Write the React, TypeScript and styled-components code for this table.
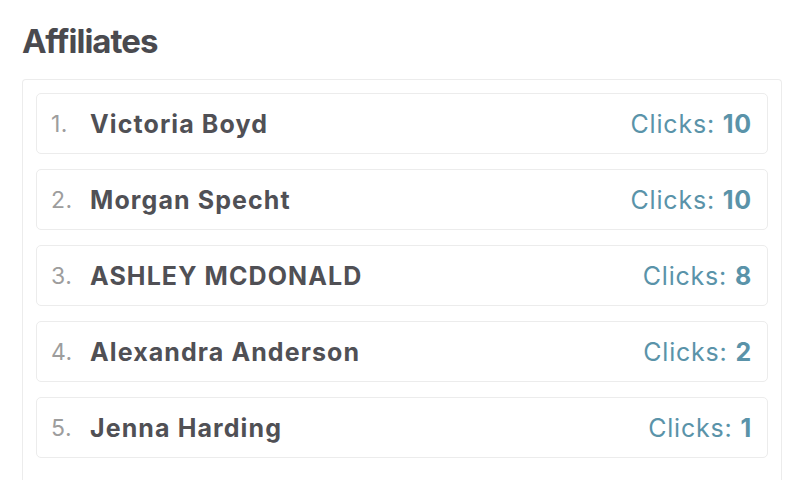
import React from "react";
import styled, { createGlobalStyle } from "styled-components";

const Global = createGlobalStyle`
  html, body { margin: 0; padding: 0; background: #fff; }
  body { font-family: Inter, "Noto Sans", sans-serif; -webkit-font-smoothing: antialiased; }
`;

const Page = styled.div`
  padding: 23px 24px 0 22px;
`;

const Title = styled.h2`
  margin: 0 0 19px 0;
  font-size: 33px;
  font-weight: 700;
  letter-spacing: -1px;
  color: #4a4a4f;
  line-height: 37px;
`;

const Panel = styled.div`
  border: 1px solid #ececec;
  border-bottom: none;
  border-radius: 4px 4px 0 0;
  padding: 13px 13px 40px 13px;
  display: flex;
  flex-direction: column;
  gap: 15px;
`;

const Row = styled.div`
  display: flex;
  align-items: center;
  height: 59px;
  border: 1px solid #ececec;
  border-radius: 5px;
  padding: 0 15px 0 14px;
`;

const Num = styled.span`
  width: 39px;
  font-size: 23px;
  color: #9d9d9d;
  letter-spacing: 0.5px;
`;

const Name = styled.span`
  flex: 1;
  font-size: 25px;
  font-weight: 700;
  letter-spacing: 1.1px;
  color: #505055;
`;

const Clicks = styled.span`
  font-size: 25px;
  letter-spacing: 0.8px;
  color: #5a93a9;
  b { font-weight: 700; }
`;

const data = [
  { name: "Victoria Boyd", clicks: 10 },
  { name: "Morgan Specht", clicks: 10 },
  { name: "ASHLEY MCDONALD", clicks: 8 },
  { name: "Alexandra Anderson", clicks: 2 },
  { name: "Jenna Harding", clicks: 1 },
];

export default function App() {
  return (
    <Page>
      <Global />
      <Title>Affiliates</Title>
      <Panel>
        {data.map((d, i) => (
          <Row key={i}>
            <Num>{i + 1}.</Num>
            <Name>{d.name}</Name>
            <Clicks>
              Clicks: <b>{d.clicks}</b>
            </Clicks>
          </Row>
        ))}
      </Panel>
    </Page>
  );
}
